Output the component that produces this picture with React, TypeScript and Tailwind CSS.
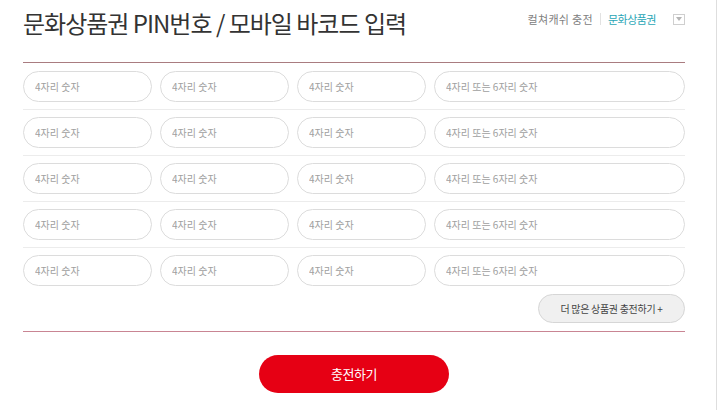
import React from 'react';

const font = { fontFamily: '"Noto Sans CJK KR", "Noto Sans", sans-serif' };

interface PinRowProps {
  last?: boolean;
}

const PinInput: React.FC<{ placeholder: string }> = ({ placeholder }) => (
  <input
    type="text"
    placeholder={placeholder}
    className="h-[31px] w-full rounded-full border border-[#dcdcdc] bg-white pl-[11px] text-[10px] text-[#555] outline-none placeholder:text-[#a0a0a0]"
  />
);

const PinRow: React.FC<PinRowProps> = ({ last }) => (
  <div
    className={`grid grid-cols-[129px_129px_129px_1fr] gap-[8px] py-[7px] ${
      last ? '' : 'border-b border-[#ececec]'
    }`}
  >
    <PinInput placeholder="4자리 숫자" />
    <PinInput placeholder="4자리 숫자" />
    <PinInput placeholder="4자리 숫자" />
    <PinInput placeholder="4자리 또는 6자리 숫자" />
  </div>
);

export default function App() {
  const rows = [0, 1, 2, 3, 4];
  return (
    <div className="h-[410px] w-[723px] overflow-hidden bg-white" style={font}>
      <div className="h-full w-[717px] border-r border-[#dedede] pl-[23px] pr-[31px]">
        <div className="flex h-[62px] items-start justify-between">
          <h1 className="mt-[8px] text-[24px] leading-[30px] tracking-[-1px] text-[#333]">
            문화상품권 PIN번호 / 모바일 바코드 입력
          </h1>
          <div className="mt-[11px] flex items-center text-[11px] leading-[16px]">
            <span className="tracking-[0.3px] text-[#808080]">컬쳐캐쉬 충전</span>
            <span className="mx-[7px] h-[12px] w-px bg-[#e2e2e2]" />
            <span className="tracking-[-0.5px] text-[#2aa6b6]">문화상품권</span>
            <span className="ml-[17px] flex h-[11px] w-[12px] items-center justify-center border border-[#cfcfcf]">
              <svg width="6" height="4" viewBox="0 0 6 4">
                <path d="M0 0 L6 0 L3 4 Z" fill="#b5b5b5" />
              </svg>
            </span>
          </div>
        </div>
        <div className="border-t border-[#a97c80] pt-px">
          {rows.map((r) => (
            <PinRow key={r} last={r === rows.length - 1} />
          ))}
          <div className="flex justify-end pb-[8px] pt-px">
            <button className="h-[29px] w-[147px] rounded-full border border-[#d6d6d6] bg-[#f0f0f0] text-[10px] tracking-[-0.3px] text-[#444]">
              더 많은 상품권 충전하기 +
            </button>
          </div>
        </div>
        <div className="border-t border-[#c98593]" />
        <div className="mt-[23px] flex justify-center">
          <button className="h-[38px] w-[190px] rounded-full bg-[#e60014] text-[13px] tracking-[-0.5px] text-white">
            충전하기
          </button>
        </div>
      </div>
    </div>
  );
}
